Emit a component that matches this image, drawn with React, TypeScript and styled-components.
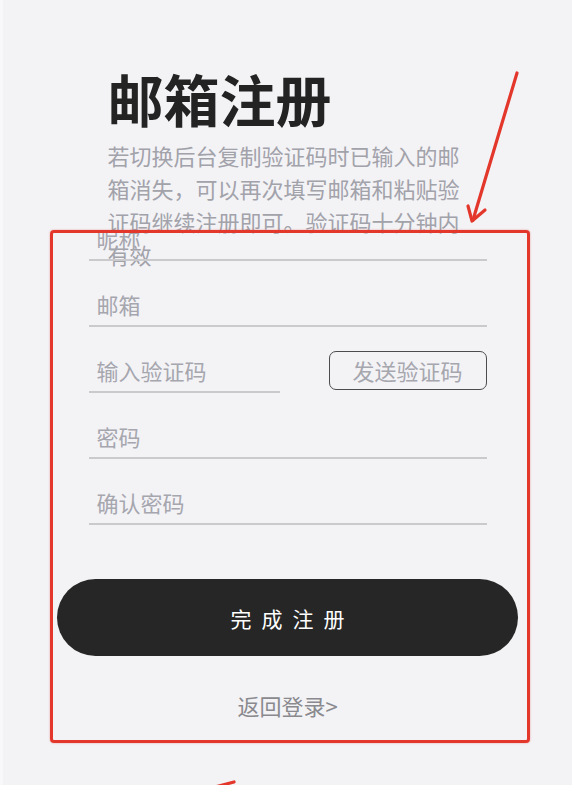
import styled, { createGlobalStyle } from 'styled-components'

const GlobalStyle = createGlobalStyle`
  html, body {
    margin: 0;
    padding: 0;
    background: #f3f3f6;
  }
  * {
    box-sizing: border-box;
  }
`

const Page = styled.div`
  position: relative;
  min-height: 785px;
  border-left: 3px solid #f8f8fa;
  background: #f3f3f6;
  display: flex;
  flex-direction: column;
  align-items: center;
  padding-top: 70px;
  font-family: 'Noto Sans CJK SC', 'Noto Sans', sans-serif;
  overflow: hidden;
`

const Header = styled.div`
  width: 360px;
  height: 147px;
`

const Title = styled.h1`
  margin: 0;
  font-size: 56px;
  line-height: 56px;
  font-weight: 700;
  color: #232323;
`

const Desc = styled.p`
  margin: 13px 0 0;
  font-size: 22px;
  line-height: 33px;
  color: #a2a2aa;
`

const Form = styled.div`
  width: 398px;
  display: flex;
  flex-direction: column;
  gap: 22px;
`

const Input = styled.input<{ $width?: number }>`
  width: ${(p) => (p.$width ? `${p.$width}px` : '100%')};
  height: 44px;
  padding: 0 0 0 8px;
  border: none;
  border-bottom: 2px solid #cacacd;
  background: transparent;
  outline: none;
  font-family: inherit;
  font-size: 22px;
  color: #333;

  &::placeholder {
    color: #a6a6ae;
  }
`

const CodeRow = styled.div`
  display: flex;
  align-items: center;
  justify-content: space-between;
`

const SendButton = styled.button`
  width: 158px;
  height: 39px;
  margin-top: -2px;
  border: 1.5px solid #4c4c4c;
  border-radius: 7px;
  background: transparent;
  font-family: inherit;
  font-size: 22px;
  line-height: 1;
  color: #a6a6ae;
  padding: 0;
`

const SubmitButton = styled.button`
  width: 461px;
  height: 77px;
  margin-top: 54px;
  border: none;
  border-radius: 40px;
  background: #262626;
  color: #fff;
  font-family: inherit;
  font-size: 21px;
  letter-spacing: 10px;
  padding: 0 0 0 10px;
`

const BackLink = styled.a`
  margin-top: 37px;
  font-size: 22px;
  line-height: 24px;
  color: #8a8a8e;
  text-decoration: none;
`

const Highlight = styled.div`
  position: absolute;
  left: 47px;
  top: 230px;
  width: 480px;
  height: 513px;
  border: 3.5px solid #e4372b;
  border-radius: 4px;
  box-shadow: 0 0 2px rgba(228, 55, 43, 0.5);
  pointer-events: none;
`

const Arrows = styled.svg`
  position: absolute;
  left: -3px;
  top: 0;
  width: 572px;
  height: 785px;
  pointer-events: none;
`

export default function App() {
  return (
    <>
      <GlobalStyle />
      <Page>
        <Header>
          <Title>邮箱注册</Title>
          <Desc>
            若切换后台复制验证码时已输入的邮箱消失，可以再次填写邮箱和粘贴验证码继续注册即可。验证码十分钟内有效
          </Desc>
        </Header>
        <Form>
          <Input placeholder='昵称' />
          <Input placeholder='邮箱' />
          <CodeRow>
            <Input placeholder='输入验证码' $width={191} />
            <SendButton>发送验证码</SendButton>
          </CodeRow>
          <Input placeholder='密码' type='password' />
          <Input placeholder='确认密码' type='password' />
        </Form>
        <SubmitButton>完成注册</SubmitButton>
        <BackLink href='#'>返回登录&gt;</BackLink>
        <Highlight />
        <Arrows viewBox='0 0 572 785'>
          <g stroke='#e4372b' strokeWidth='3.2' strokeLinecap='round' strokeLinejoin='round' fill='none'>
            <line x1='517' y1='73' x2='473' y2='220' />
            <polyline points='468,206 472,221 485,210' />
            <line x1='215' y1='787' x2='234' y2='782' />
          </g>
        </Arrows>
      </Page>
    </>
  )
}
